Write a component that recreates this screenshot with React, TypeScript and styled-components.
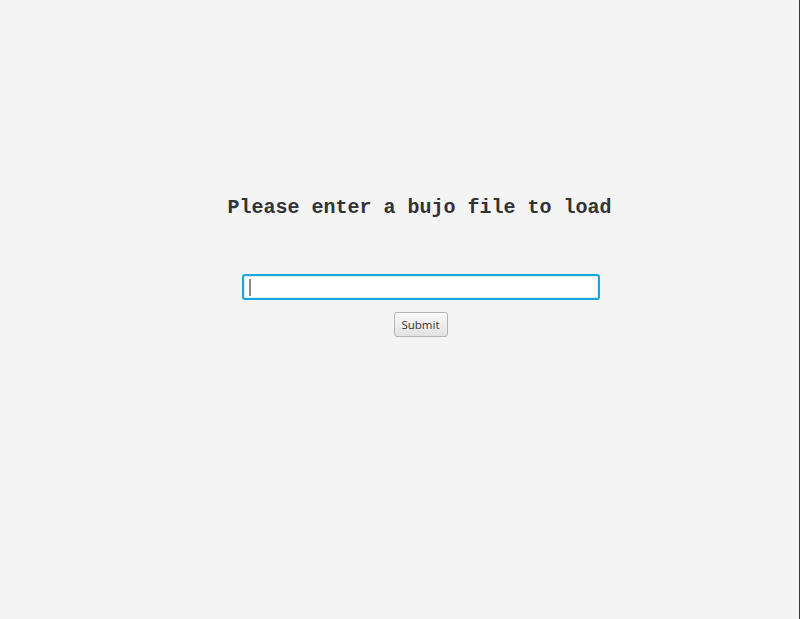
import React from "react";
import styled, { createGlobalStyle } from "styled-components";

const Global = createGlobalStyle`
  html, body { margin: 0; padding: 0; background: #f4f4f4; }
  body { width: 800px; height: 619px; overflow: hidden; }
  #root { height: 100%; }
`;

const Window = styled.div`
  box-sizing: border-box;
  width: 800px;
  height: 619px;
  background: #f4f4f4;
  border-right: 1px solid #3a3a3a;
  display: flex;
  flex-direction: column;
  align-items: center;
  padding-top: 196px;
  padding-left: 42px;
`;

const Heading = styled.h1`
  margin: 0 2px 0 0;
  font-family: "Liberation Mono", "Courier New", monospace;
  font-weight: bold;
  font-size: 20px;
  line-height: 24px;
  color: #333333;
  white-space: nowrap;
`;

const TextField = styled.div`
  box-sizing: border-box;
  margin-top: 54px;
  width: 358px;
  height: 26px;
  background: #ffffff;
  border: 2px solid #18a6de;
  border-radius: 3px;
  box-shadow: inset 0 0 0 1px #d9eff8;
  display: flex;
  align-items: center;
  padding-left: 5px;
`;

const Caret = styled.span`
  display: block;
  width: 2px;
  height: 17px;
  background: #8a8a8a;
`;

const Button = styled.button`
  box-sizing: border-box;
  margin-top: 12px;
  width: 54px;
  height: 25px;
  padding: 0;
  border: 1px solid #b4b4b4;
  border-radius: 3px;
  background: linear-gradient(#fafafa, #e2e2e2);
  box-shadow: inset 0 1px 0 #ffffff;
  font-family: "Open Sans", "Noto Sans", sans-serif;
  font-size: 11.5px;
  color: #333333;
  cursor: default;
`;

export default function App() {
  return (
    <>
      <Global />
      <Window>
        <Heading>Please enter a bujo file to load</Heading>
        <TextField>
          <Caret />
        </TextField>
        <Button>Submit</Button>
      </Window>
    </>
  );
}
